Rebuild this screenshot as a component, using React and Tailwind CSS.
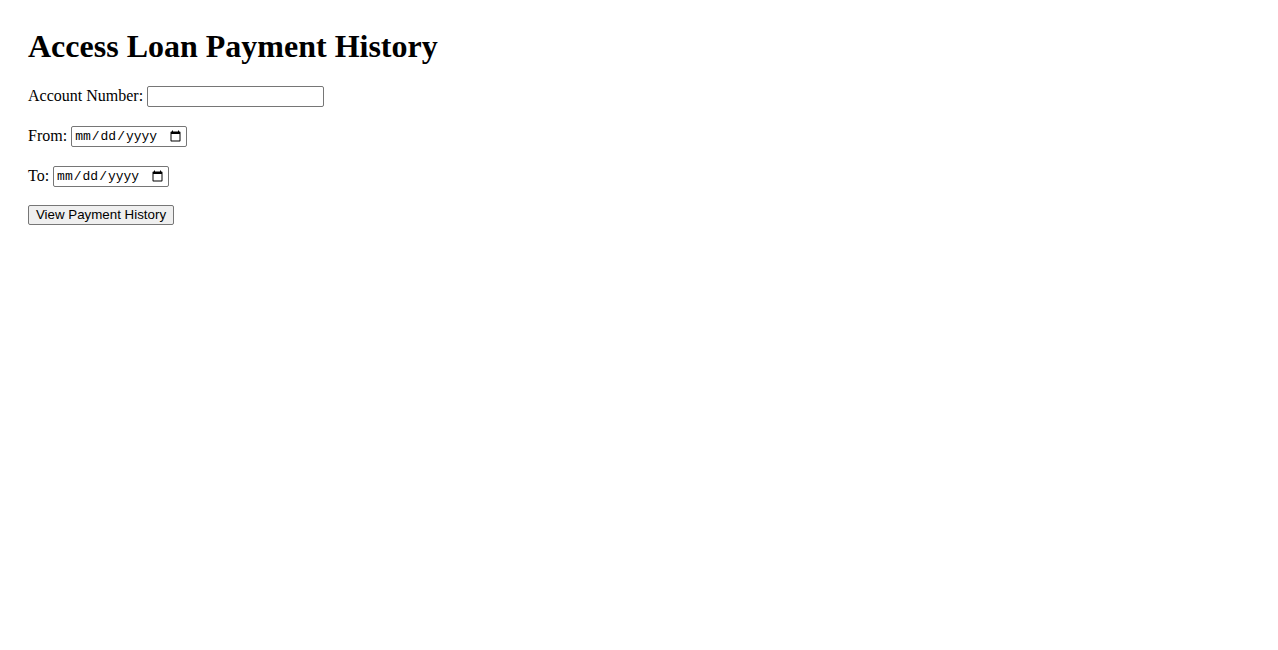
export default function App() {
  return (
    <div className="min-h-screen bg-white pt-[28px] pl-[28px] font-['Liberation_Serif',serif] text-black">
      <h1 className="text-[32px] font-bold leading-[37px]">Access Loan Payment History</h1>

      <form className="mt-[21px] flex flex-col text-[16px]" onSubmit={(e) => e.preventDefault()}>
        <div className="flex h-[21px] items-center gap-[4px]">
          <label htmlFor="account" className="-mt-[1px]">Account Number:</label>
          <input
            id="account"
            type="text"
            className="h-[21px] w-[177px] rounded-[2px] border border-[#767676] px-[2px] text-[13px] font-['Liberation_Sans',sans-serif]"
          />
        </div>

        <div className="mt-[19px] flex h-[21px] items-center gap-[4px]">
          <label htmlFor="from" className="-mt-[1px]">From:</label>
          <input
            id="from"
            type="date"
            className="h-[21px] w-[116px] rounded-[2px] border border-[#767676] px-[2px] text-[13px] font-['Liberation_Mono',monospace]"
          />
        </div>

        <div className="mt-[19px] flex h-[21px] items-center gap-[4px]">
          <label htmlFor="to" className="-mt-[1px]">To:</label>
          <input
            id="to"
            type="date"
            className="h-[21px] w-[116px] rounded-[2px] border border-[#767676] px-[2px] text-[13px] font-['Liberation_Mono',monospace]"
          />
        </div>

        <div className="mt-[18px] flex h-[20px] items-center">
          <button
            type="submit"
            className="h-[20px] w-[146px] rounded-[2px] border border-[#767676] bg-[#efefef] px-[6px] text-[13.33px] leading-none text-black font-['Liberation_Sans',sans-serif]"
          >
            View Payment History
          </button>
        </div>
      </form>
    </div>
  );
}
